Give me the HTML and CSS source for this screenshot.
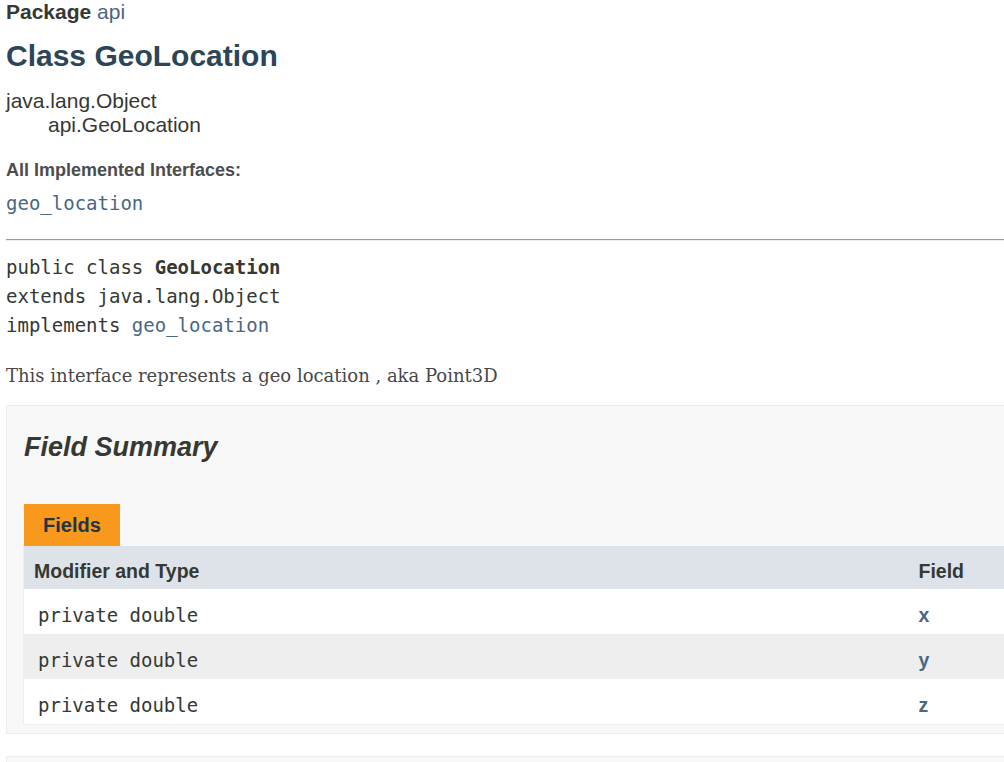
FILE: index.html
```html
<!DOCTYPE html>
<html lang="en">
<head>
<meta charset="utf-8">
<title>GeoLocation</title>
<link rel="stylesheet" href="styles.css">
</head>
<body>
<main class="page">
  <header class="header">
    <div class="sub-title"><span class="pkg-label">Package</span> <a class="link" href="#">api</a></div>
    <h1 class="title">Class GeoLocation</h1>
  </header>
  <div class="inheritance">
    <div class="inh-line">java.lang.Object</div>
    <div class="inh-line inh-child">api.GeoLocation</div>
  </div>
  <dl class="interfaces">
    <dt class="dt">All Implemented Interfaces:</dt>
    <dd class="dd"><code class="code"><a class="link" href="#">geo_location</a></code></dd>
  </dl>
  <hr class="rule">
  <div class="signature">
    <div class="sig-line">public class <b class="bold">GeoLocation</b></div>
    <div class="sig-line">extends java.lang.Object</div>
    <div class="sig-line">implements <a class="link" href="#">geo_location</a></div>
  </div>
  <p class="description">This interface represents a geo location , aka Point3D</p>

  <section class="summary">
    <h2 class="summary-title">Field Summary</h2>
    <div class="tab">Fields</div>
    <table class="member-table">
      <colgroup>
        <col class="col-first">
        <col class="col-second">
      </colgroup>
      <thead>
        <tr class="head-row">
          <th class="th">Modifier and Type</th>
          <th class="th">Field</th>
        </tr>
      </thead>
      <tbody>
        <tr class="row">
          <td class="td td-code">private double</td>
          <td class="td td-name"><a class="link field-link" href="#">x</a></td>
        </tr>
        <tr class="row row-alt">
          <td class="td td-code">private double</td>
          <td class="td td-name"><a class="link field-link" href="#">y</a></td>
        </tr>
        <tr class="row">
          <td class="td td-code">private double</td>
          <td class="td td-name"><a class="link field-link" href="#">z</a></td>
        </tr>
      </tbody>
    </table>
  </section>

  <section class="summary summary-next">
    <h2 class="summary-title">Constructor Summary</h2>
  </section>
</main>
</body>
</html>
```

FILE: styles.css
```css
html {
  overflow: hidden;
  background: #ffffff;
}

body {
  margin: 0;
  padding: 0;
  font-family: "Liberation Sans", Arial, sans-serif;
  color: #353833;
  font-size: 21px;
  background: #ffffff;
}

.page {
  width: 1100px;
  padding: 0 0 0 6px;
}

.link {
  color: #4a6782;
  text-decoration: none;
}

.header {
  display: flex;
  flex-direction: column;
}

.sub-title {
  font-size: 21px;
  line-height: 24px;
  height: 24px;
}

.pkg-label {
  font-weight: bold;
}

.title {
  margin: 14px 0 0 0;
  font-size: 30px;
  line-height: 36px;
  font-weight: bold;
  color: #2c4557;
}

.inheritance {
  margin-top: 15px;
  font-size: 21px;
  line-height: 24px;
  color: #353833;
}

.inh-child {
  padding-left: 42px;
}

.interfaces {
  margin: 23px 0 0 0;
}

.dt {
  font-size: 18px;
  line-height: 21px;
  font-weight: bold;
  color: #4d4d4d;
}

.dd {
  margin: 10px 0 0 0;
  font-family: "DejaVu Sans Mono", "Liberation Mono", monospace;
  font-size: 19px;
  line-height: 24px;
}

.code {
  font-family: "DejaVu Sans Mono", "Liberation Mono", monospace;
  font-size: 19px;
}

.rule {
  margin: 24px 0 0 0;
  border: 0;
  border-top: 1px solid #9a9a9a;
  border-bottom: 1px solid #eeeeee;
  height: 0;
}

.signature {
  margin: 11px 0 0 0;
  display: flex;
  flex-direction: column;
  font-family: "DejaVu Sans Mono", "Liberation Mono", monospace;
  font-size: 19px;
  color: #353833;
  white-space: pre;
}

.sig-line {
  height: 29px;
  padding-top: 3px;
  box-sizing: border-box;
  line-height: 24px;
}

.bold {
  font-weight: bold;
}

.description {
  margin: 23px 0 0 0;
  font-family: "DejaVu Serif", "Liberation Serif", serif;
  font-size: 18px;
  line-height: 27px;
  color: #474747;
}

.summary {
  margin-top: 16px;
  background: #f8f8f8;
  border: 1px solid #ededed;
  padding: 25px 0 8px 16px;
}

.summary-title {
  margin: 0;
  font-size: 27px;
  line-height: 32px;
  font-style: italic;
  font-weight: bold;
  color: #353833;
  padding-left: 1px;
}

.tab {
  margin: 41px 0 0 1px;
  display: inline-block;
  vertical-align: top;
  background: #f8981d;
  color: #253441;
  font-weight: bold;
  font-size: 20px;
  line-height: 42px;
  height: 42px;
  padding: 0 19px 0 19px;
}

.member-table {
  border-collapse: collapse;
  table-layout: fixed;
  width: 100%;
  border: 1px solid #eeeeee;
  border-top: 0;
  background: #ffffff;
}

.col-first {
  width: 885px;
}

.head-row {
  background: #dee3e9;
}

.th {
  text-align: left;
  font-size: 19.5px;
  font-weight: bold;
  line-height: 27px;
  height: 27px;
  padding: 12px 10px 4px 10px;
  color: #353833;
}

.td {
  padding: 12px 10px 4px 10px;
  line-height: 29px;
  height: 29px;
  vertical-align: top;
}

.td-code {
  padding-left: 14px;
  font-family: "DejaVu Sans Mono", "Liberation Mono", monospace;
  font-size: 19px;
}

.td-name {
  font-size: 19.5px;
}

.row {
  background: #ffffff;
}

.row-alt {
  background: #eeeeef;
}

.field-link {
  font-weight: bold;
}

.summary-next {
  margin-top: 22px;
  height: 200px;
}
```
